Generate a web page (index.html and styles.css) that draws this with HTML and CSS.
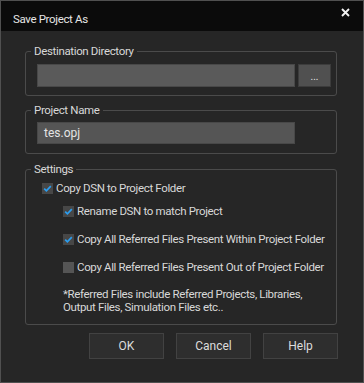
FILE: index.html
```html
<!DOCTYPE html>
<html>
<head>
<meta charset="utf-8">
<link rel="stylesheet" href="styles.css">
</head>
<body>
<div class="window">
  <div class="titlebar">
    <span class="title">Save Project As</span>
    <span class="close"><svg width="9" height="9" viewBox="0 0 9 9"><path d="M1 1 L8 8 M8 1 L1 8" stroke="#f2f2f2" stroke-width="1.9" fill="none"/></svg></span>
  </div>
  <div class="content">
    <fieldset class="group dest">
      <legend>Destination Directory</legend>
      <div class="row">
        <div class="input dest-input"></div>
        <div class="browse">...</div>
      </div>
    </fieldset>
    <fieldset class="group pname">
      <legend>Project Name</legend>
      <div class="input name-input">tes.opj</div>
    </fieldset>
    <fieldset class="group settings">
      <legend>Settings</legend>
      <div class="check main"><span class="box"><svg width="11" height="11" viewBox="0 0 11 11"><path d="M2.2 5.6 L4.4 7.8 L8.8 3.2" stroke="#2b9ef0" stroke-width="1.7" fill="none"/></svg></span>Copy DSN to Project Folder</div>
      <div class="sub">
        <div class="check"><span class="box"><svg width="11" height="11" viewBox="0 0 11 11"><path d="M2.2 5.6 L4.4 7.8 L8.8 3.2" stroke="#2b9ef0" stroke-width="1.7" fill="none"/></svg></span>Rename DSN to match Project</div>
        <div class="check"><span class="box"><svg width="11" height="11" viewBox="0 0 11 11"><path d="M2.2 5.6 L4.4 7.8 L8.8 3.2" stroke="#2b9ef0" stroke-width="1.7" fill="none"/></svg></span>Copy All Referred Files Present Within Project Folder</div>
        <div class="check"><span class="box empty"></span>Copy All Referred Files Present Out of Project Folder</div>
        <p class="note">*Referred Files include Referred Projects, Libraries,<br>Output Files, Simulation Files etc..</p>
      </div>
    </fieldset>
    <div class="buttons">
      <div class="btn">OK</div>
      <div class="btn">Cancel</div>
      <div class="btn">Help</div>
    </div>
  </div>
</div>
</body>
</html>
```
FILE: styles.css
```css
* { box-sizing: border-box; }
html, body { margin: 0; padding: 0; background: #262626; }
body {
  font-family: Roboto, "Liberation Sans", Arial, sans-serif;
  font-size: 11.5px;
  letter-spacing: -0.35px;
  color: #d8d8d8;
}
.window {
  width: 364px;
  height: 383px;
  border: 1px solid #505050;
  background: #262626;
}
.titlebar {
  height: 30px;
  background: #0b0b0b;
  display: flex;
  justify-content: space-between;
  align-items: flex-start;
  padding: 11px 0 0 12px;
}
.title {
  font-size: 11.5px;
  line-height: 14px;
  color: #e6e6e6;
}
.close {
  display: flex;
  margin: -4px 13px 0 0;
}
.content {
  padding: 13px 0 0 24px;
}
.group {
  margin: 0;
  width: 312px;
  border: 1px solid #4b4b4b;
  border-radius: 3px;
  padding: 5px 5px 8px 11px;
  min-width: 0;
}
.group legend {
  padding: 0 3px;
  margin-left: -6px;
  line-height: 15px;
  font-size: 11.5px;
  color: #d8d8d8;
}
.row { display: flex; gap: 3px; }
.input {
  background: #5a5a5a;
  border: 1px solid #484848;
}
.dest-input { width: 258px; height: 23px; }
.browse {
  width: 33px;
  height: 23px;
  background: #505050;
  border: 1px solid #3c3c3c;
  display: flex;
  align-items: center;
  justify-content: center;
  color: #e8e8e8;
  font-size: 10px;
  letter-spacing: 0;
  padding-top: 2px;
}
.pname { margin-top: 7px; padding: 4px 5px 9px 11px; }
.name-input {
  width: 258px;
  height: 22px;
  line-height: 20px;
  padding-left: 6px;
  font-size: 12px;
  letter-spacing: 0;
  color: #e4e4e4;
  background: #555555;
}
.settings { margin-top: 8px; padding: 4px 5px 10px 16px; }
.settings legend { margin-left: -11px; }
.check {
  display: flex;
  align-items: center;
  gap: 3px;
  height: 14px;
  line-height: 14px;
  white-space: nowrap;
}
.box {
  flex-shrink: 0;
  width: 11px;
  height: 11px;
  background: #474747;
  display: flex;
}
.box.empty { background: #555555; }
.sub {
  margin: 9px 0 0 21px;
  display: flex;
  flex-direction: column;
  gap: 14px;
}
.note {
  margin: 0;
  line-height: 13px;
  white-space: nowrap;
}
.buttons {
  display: flex;
  gap: 12px;
  margin: 8px 0 0 64px;
}
.btn {
  width: 75px;
  height: 26px;
  background: #2e2e2e;
  border: 1px solid #424242;
  display: flex;
  align-items: center;
  justify-content: center;
  font-size: 12px;
  letter-spacing: 0;
  color: #dcdcdc;
}
```
